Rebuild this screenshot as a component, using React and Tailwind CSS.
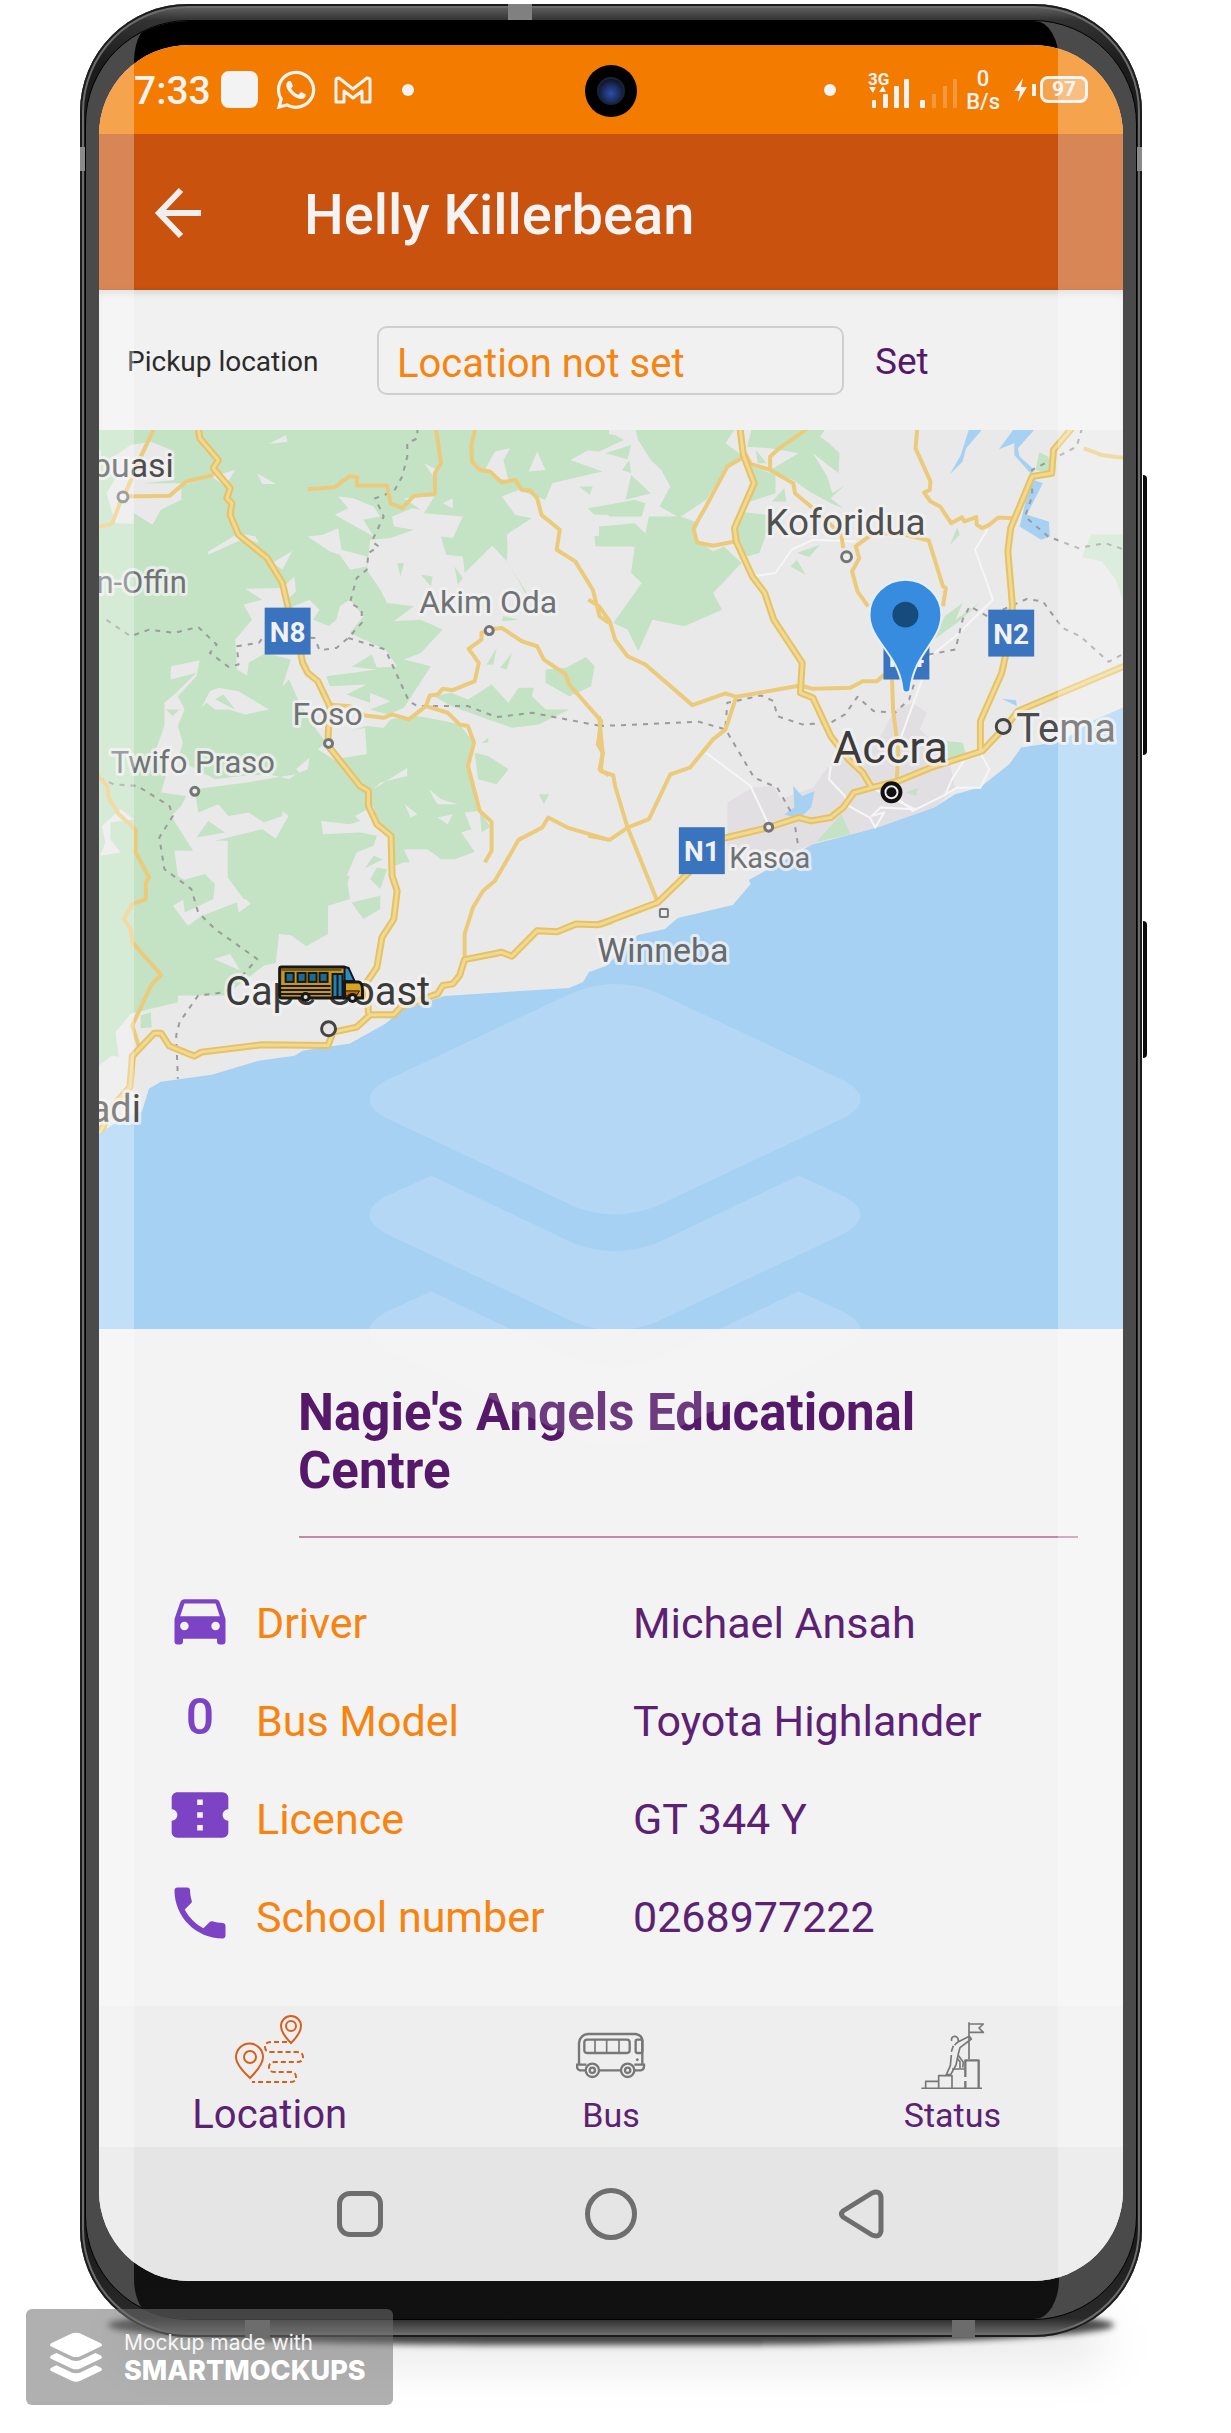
import React from "react";
import { FaWhatsapp } from "react-icons/fa";
import { MdDirectionsCar, MdConfirmationNumber, MdPhone } from "react-icons/md";

const WEST = "translate(80 420) scale(0.338 0.33333)";
const EAST = "translate(600 420) scale(0.35714 0.33333)";

const westTrunks = [
  "350,20 355,55 410,120 395,145 445,205 435,235 450,250 445,285 470,345 555,415 600,490 617,565 640,640 655,705 660,730 675,760 705,785 740,860 735,960 740,985 830,1100 855,1115 855,1160 880,1215 922,1250 925,1370 940,1415 930,1500 895,1555 880,1645 850,1690 855,1785",
  "60,2140 100,2060 148,2005 155,1912 220,1843 240,1843 265,1882 338,1912 360,1900 540,1878 735,1880 750,1840 820,1825 860,1788 930,1788 950,1765 1060,1725 1075,1700 1105,1695 1125,1670 1140,1622 1250,1600 1280,1612 1355,1535 1415,1538 1470,1515 1535,1517 1575,1505",
];
const eastTrunks = [
  "0,1517 165,1450 250,1362 300,1270 475,1225 560,1195 595,1205 650,1195 685,1165 715,1120 765,1105 840,1085 930,1045 1075,995 1150,910 1175,875 1480,737",
  "395,20 405,105 435,190 380,325 385,365 430,470 465,520 490,600 570,730 565,820 600,835 650,950 700,1020 740,1060 765,1105",
  "1330,20 1275,90 1270,160 1215,170 1155,325 1147,395 1160,560 1140,710 1130,760 1070,905 1070,995",
];
const westRoads = [
  "220,25 180,110 130,230 265,228 315,185 395,165",
  "120,245 95,312 50,322",
  "675,208 755,202 800,168 822,172 820,197 910,197 920,250 955,265 990,228 1052,222 1052,160 1070,130 1055,25",
  "1172,25 1160,75 1162,125 1185,150 1215,155 1250,188 1290,180 1310,210 1335,212 1355,235 1368,285 1422,330 1413,390 1468,425 1520,510 1540,590 1568,610",
  "740,855 800,860 845,888 900,895 925,885 975,900 1025,860 1037,828 1060,825 1075,808 1105,812 1170,785 1182,730 1152,688 1190,660 1190,640 1212,630 1250,625 1310,665 1355,680 1375,720 1440,765 1450,795 1545,905 1535,975 1550,1000 1540,1050 1568,1068",
  "1025,860 1090,880 1125,915 1150,920 1168,970 1150,1040 1185,1175 1220,1208 1220,1295 1200,1330",
  "1568,1262 1445,1225 1388,1195 1370,1225 1300,1262 1230,1385 1195,1415 1165,1465 1140,1545 1140,1620",
  "50,1065 80,1100 85,1135 115,1185 165,1232 165,1300 205,1375 195,1390 195,1440 155,1455 130,1500 150,1530 155,1570 240,1668 210,1700 155,1820 175,1885",
];
const eastRoads = [
  "-30,540 0,560 30,605 45,660 80,710 130,735 262,857 355,822 385,832 565,798 600,808 705,805 740,785 780,785 800,765",
  "0,890 10,1000 5,1055 40,1068 45,1100 80,1225 165,1450",
  "-30,1250 30,1262 80,1225 140,1200 200,1065 255,1045 320,960 355,930 385,832",
  "585,25 500,90 480,110 480,150 425,132 410,100",
  "480,150 545,190 550,220 600,265 680,345 685,385",
  "400,115 360,140 300,260 265,325 275,368 320,378 380,365",
  "965,560 973,505 965,500 925,362 860,345 770,340 720,380 730,415 710,455 725,515 755,560",
  "893,25 888,85 930,185 928,210 912,218 930,245 957,260 988,310 1018,292 1025,305 1058,292 1060,315 1075,325 1095,315 1120,293 1165,295",
  "822,780 825,870 840,1000 835,1085",
  "1360,85 1410,105 1480,115",
];
const westBorders = [
  "1000,25 1000,55 970,70 970,110 955,170 930,215 875,235 900,290 865,365 885,380 855,400 850,450 820,475 800,550 835,570 835,610 795,655 760,685 710,692 695,655 545,650 530,670 465,680 470,735 440,742 385,700 405,675 350,622 280,640 205,630 150,650 70,595",
  "795,655 905,690 975,845 1000,860 1150,860 1235,893 1340,880 1545,920",
  "56,1075 100,1095 170,1100 265,1160 275,1190 235,1255 250,1350 330,1410 350,1480 400,1530 525,1620 490,1660 430,1720 350,1730 295,1810 285,1850 290,1980",
];
const eastBorders = [
  "0,920 280,907 355,930 435,1075 500,1105 545,1190 558,1275",
  "355,920 360,850 455,828 490,845 500,890 570,915 650,910 690,885 725,832 770,875 830,880 870,840 885,790",
  "925,705 1000,690 1020,600 1040,560 1090,590 1200,538 1245,545 1300,625 1350,650 1430,727 1475,700",
  "1355,25 1340,80 1215,150 1215,230 1195,290 1260,350 1345,385 1420,370 1475,390",
];
const westGaps = [
  "560,72 610,45 615,65",
  "150,75 210,65 270,90 280,180 190,190 300,190 300,240 240,270 215,315 160,280 158,312 105,310 78,220 110,170 100,110",
  "525,160 580,192 540,192",
  "320,190 460,150 430,200 390,170 310,195",
  "470,340 520,350 530,370 490,355 380,405 380,395",
  "570,430 630,393 600,450",
  "490,507 600,505 635,470 640,515 615,540 620,565 680,540 710,570 690,600 740,620 700,650 760,600 770,560 800,540 840,590 800,640 905,690 940,740 880,745 865,705 805,742 880,750 810,760 730,770 740,800 850,795 790,825 860,850 860,820 920,845 860,870 930,890 900,925 850,920 800,935 845,925 850,1005 750,1020 705,990 730,970 700,930 650,850 620,780 600,800 625,720 550,700 500,730 495,768 465,750 460,660 510,600 485,555 540,540",
  "268,770 270,740 355,722 345,770 290,830 310,870 290,920 305,970 290,1020 400,1080 480,1070 560,1065 620,1080 640,1065 490,1090 340,1110 350,1180 410,1155 440,1190 500,1180 545,1210 600,1190 600,1175 618,1190 580,1258 540,1230 400,1265 438,1265 438,1375 485,1440 525,1440 470,1480 465,1450 360,1490 320,1520 275,1460 310,1440 335,1400 290,1370 280,1295 335,1295 270,1190 300,1160 315,1130 240,1120 260,1050 225,990 250,920 250,850 285,820 345,760 270,780",
  "360,865 385,815 410,805 470,815 560,870 490,885 440,870 400,870 375,850",
  "65,1220 120,1170 160,1200 90,1210 90,1260 120,1300 60,1310 75,1270",
  "765,230 810,235 870,260 890,290 840,300 870,350 800,310 755,285 795,265",
  "675,350 720,345 765,325 775,390 850,410 850,440 800,450 770,405 740,395",
  "925,290 985,265 1010,270 960,235 1050,230 1020,280 1135,290 1105,355 1070,350 1085,405 1135,410 1140,460 1222,378 1270,430 1320,520 1568,560 1568,1320 1240,1320 1130,1370 1130,1325 980,1335 960,1290 1030,1290 1070,1320 1185,1320 1130,1240 1160,1230 1140,1180 1185,1175 1190,1240 1220,1220 1185,1170 1150,1040 1168,970 1125,915 1080,905 1000,890 870,905 960,865 1040,740 960,720 1010,700 1075,630 1010,600 930,605 990,560 910,550 890,510 850,450 860,360 920,355 990,330 930,320",
  "1020,130 1060,150 1055,180",
  "1075,250 1105,235 1105,265",
  "1330,155 1355,95 1380,150",
  "1200,150 1230,95 1275,85 1255,120 1270,180 1230,175",
  "1455,120 1568,60 1568,620 1500,560 1440,450 1350,430 1270,420 1265,345 1340,295 1290,285 1250,230 1300,210 1380,240 1400,190 1550,155",
  "640,1050 680,1015 675,1050 650,1060",
  "715,1205 800,1215 830,1205 815,1190 870,1160 880,1215 920,1250 920,1330 870,1310 830,1370 790,1370 820,1300 870,1280 880,1250 830,1240 720,1245",
  "1035,1110 1070,1140 1120,1155 1060,1155 1050,1140",
  "1060,1195 1105,1185 1090,1215",
  "962,1155 1000,1185 980,1195",
  "870,1110 970,1045 970,1070 890,1090",
  "397,1620 445,1605 475,1655",
  "775,1440 800,1370 920,1310 925,1400 925,1560 735,1560 735,1445",
];
const westPatches = [
  "790,355 850,410 800,385",
  "940,430 960,430 950,470",
  "1010,465 1045,470 1040,500",
  "1110,440 1135,475 1120,495",
  "1250,605 1255,590 1300,600",
  "1205,735 1235,685 1225,735",
  "1245,745 1280,700 1265,750",
  "1380,750 1440,745 1500,712 1525,740 1515,800 1450,830 1380,790",
  "1100,820 1150,840 1220,795 1270,850 1300,805 1345,805 1340,830 1380,870 1450,870 1360,915 1280,925 1210,900 1100,860 1050,830",
  "1190,970 1210,955 1210,970",
  "1170,1000 1210,1010 1270,1050 1235,1095 1180,1080",
  "1360,1125 1390,1125 1375,1155",
  "1480,200 1520,200 1510,225",
  "1505,265 1568,255 1568,285 1525,285",
  "1525,350 1568,340 1568,375 1528,380",
  "345,1255 380,1205 430,1240",
  "255,870 295,870 275,890",
  "400,840 425,825 460,870",
  "440,1265 540,1240 640,1300 780,1300 800,1440 735,1460 730,1540 670,1582 560,1500 490,1440",
  "300,1385 370,1365 400,1395 395,1440 310,1480",
  "805,1450 890,1430 890,1470 840,1500",
  "860,1380 880,1345 910,1350 890,1410",
  "180,1790 210,1780 212,1825 180,1828",
];
const eastGreens = [
  "100,20 385,20 355,70 400,105 350,160 300,240 230,290 280,310 265,350 320,395 350,380 400,430 320,520 345,570 240,620 150,600 110,695 80,630 40,610 120,490 90,460 100,380 0,380 0,320 100,310 130,340 140,290 220,290 170,260 200,200 175,150 145,120 110,60",
  "-40,30 45,45 70,60 0,95 -40,90",
  "18,100 90,75 80,118",
  "65,150 85,120 90,160",
  "90,165 145,220 75,240",
  "0,260 100,240 130,250 120,290 30,290",
  "430,20 640,20 620,50 645,70 675,100 672,160 600,100 640,170 655,220 690,195 650,235 685,265 650,250 590,215 545,180 480,150 560,100 480,85 415,80",
  "445,130 440,90 470,130",
  "430,140 495,165 495,220 425,245",
  "485,245 520,205 525,245",
  "390,275 470,285 520,310 470,340 450,400 415,410 385,350",
  "555,400 620,375 590,412",
  "537,440 555,420 580,465",
  "985,375 1005,322 1012,345",
  "940,660 970,590 1020,550 1000,600 1070,548 1010,605",
  "1225,150 1235,97 1260,110 1270,160",
];
const labels = [
  { t: "buasi", x: 174, y: 477, s: 34, c: "#4d4d4d", a: "end" },
  { t: "n-Offin", x: 187, y: 593, s: 31, c: "#6f7376", a: "end" },
  { t: "Akim Oda", x: 489, y: 613, s: 32, c: "#6f7376", a: "middle" },
  { t: "Foso", x: 328, y: 726, s: 32, c: "#6f7376", a: "middle" },
  { t: "Twifo Praso", x: 193, y: 774, s: 31, c: "#6f7376", a: "middle" },
  { t: "Koforidua", x: 847, y: 535, s: 37, c: "#505050", a: "middle" },
  { t: "Accra", x: 892, y: 764, s: 45, c: "#3b3b3b", a: "middle" },
  { t: "Tema", x: 1068, y: 743, s: 40, c: "#4d4d4d", a: "middle" },
  { t: "Kasoa", x: 771, y: 869, s: 29, c: "#6f7376", a: "middle" },
  { t: "Winneba", x: 664, y: 963, s: 34, c: "#666a6e", a: "middle" },
  { t: "Cape Coast", x: 328, y: 1006, s: 40, c: "#3b3b3b", a: "middle" },
  { t: "adi", x: 141, y: 1123, s: 38, c: "#4d4d4d", a: "end" },
];
const towns = [
  [123, 497, 5],
  [490, 631, 4],
  [329, 744, 4],
  [195, 792, 4],
  [848, 557, 5],
  [770, 828, 4],
];
const shields = [
  { t: "N8", x: 265, y: 608 },
  { t: "N2", x: 990, y: 610 },
  { t: "N1", x: 680, y: 828 },
  { t: "N4", x: 885, y: 633 },
];

function Lines({ list, color, width, dash }) {
  return list.map((p) => (
    <polyline
      key={p}
      points={p}
      fill="none"
      stroke={color}
      strokeWidth={width}
      strokeDasharray={dash}
      strokeLinejoin="round"
      vectorEffect="non-scaling-stroke"
    />
  ));
}

function Shapes({ list, color }) {
  return list.map((p) => <polygon key={p} points={p} fill={color} />);
}

function SchoolBus() {
  return (
    <g>
      <rect x="280" y="968" width="66" height="31" rx="2" fill="#c6971d" stroke="#171717" strokeWidth="3" />
      <rect x="282" y="970" width="60" height="2" fill="#171717" opacity=".5" />
      {[286, 298, 309, 320].map((x) => (
        <rect key={x} x={x} y="974" width="8" height="9" fill="#1f6a93" stroke="#171717" strokeWidth="2" />
      ))}
      <path d="M281 987h50M281 991h50M281 995h50" stroke="#171717" strokeWidth="2" />
      <path d="M333 975h10v23h-10zM338 975v23" fill="#2380b3" stroke="#171717" strokeWidth="2" />
      <path d="M345 968l4 1 6 13h-10z" fill="#2c8dc4" stroke="#171717" strokeWidth="2" />
      <path d="M345 983h14q4 1 4 8v8h-18z" fill="#d9a520" stroke="#171717" strokeWidth="3" />
      <path d="M346 992h14l-3 5h-11z" fill="#bf6a12" stroke="#171717" strokeWidth="1" />
      <circle cx="306" cy="998" r="5" fill="#171717" />
      <circle cx="306" cy="998" r="2" fill="#ddd" />
      <circle cx="353" cy="999" r="5" fill="#171717" />
      <circle cx="353" cy="999" r="2" fill="#ddd" />
    </g>
  );
}

function CoastMap() {
  return (
    <svg viewBox="99 430 1026 901" className="block h-auto w-full" role="img" aria-label="Map from Cape Coast to Accra">
      <rect x="99" y="430" width="1026" height="901" fill="#a6d1f3" />
      <path
        fill="#e9e9e9"
        d="M99 430H1125V708L1093 722 1064 742 1023 748 1011 765 982 788 957 795 936 808 879 828 857 834 814 845 764 873 750 881 752 885 734 906 679 919 666 930 639 936 607 967 590 973 584 983 570 989 445 997 401 1012 386 1025 350 1045 328 1048 303 1052 295 1057 259 1062 212 1076 161 1083 149 1090 142 1113 125 1118 99 1135Z"
      />
      <g transform={WEST}>
        <polygon
          fill="#c4e2c4"
          points="50,20 1568,20 1568,55 1455,120 1550,155 1400,190 1380,240 1340,295 1270,340 1265,425 1400,640 1200,900 1165,970 1180,1170 1215,1220 1190,1290 1100,1325 960,1330 820,1380 780,1440 735,1445 735,1545 670,1582 640,1550 590,1545 580,1632 545,1640 430,1730 290,1730 290,1750 150,1785 105,1840 115,1915 95,1910 50,1945"
        />
        <Shapes list={westGaps} color="#e9e9e9" />
        <Shapes list={westPatches} color="#c4e2c4" />
      </g>
      <g transform={EAST}>
        <Shapes list={eastGreens} color="#c4e2c4" />
        <polygon points="1380,343 1475,343 1475,560 1450,480 1410,425 1355,412" fill="#cfe6cf" />
        <polygon
          fill="#e2dfe3"
          points="360,1150 430,1105 490,1100 510,1140 600,1105 640,1045 700,1010 790,950 830,870 880,850 920,880 900,930 980,1010 1000,1110 940,1165 780,1225 600,1275 540,1300 360,1290"
        />
        <Shapes
          list={["975,965 1020,970 1030,1005 980,1020", "680,1185 705,1245 610,1268", "860,1120 895,1105 890,1130"]}
          color="#c4e2c4"
        />
        <Shapes
          list={[
            "1040,20 1075,28 1030,85 1020,125 985,162 1015,105",
            "1165,25 1225,25 1175,85 1180,110 1222,150 1212,162 1165,105 1165,70 1122,88",
            "1220,180 1245,190 1200,285 1262,305 1265,350 1240,360 1180,320 1200,230",
            "545,1100 570,1130 605,1115 595,1165 560,1200 520,1185 548,1165",
            "1130,838 1170,842 1172,860",
          ]}
          color="#a6d1f3"
        />
        <Lines
          list={[
            "430,470 495,460 540,390 600,360 720,365",
            "1090,330 1055,390 1105,540 1000,650 930,710 845,960",
            "300,1000 425,1100 475,1215",
            "650,1040 645,1080 690,1130 700,1160 760,1195 775,1225 800,1180 765,1190 790,1165 885,1170 765,1105",
            "1070,1000 1095,1050 1070,1105 1005,1105 965,1130 880,1175 830,1130",
            "1035,1005 990,1080 970,1130",
          ]}
          color="#f6f6f6"
          width="2"
        />
      </g>
      <g transform={WEST}>
        <Lines list={westBorders} color="#9b9b9b" width="2" dash="5 6" />
        <Lines list={westRoads} color="#ebcb7b" width="4" />
        <Lines list={westTrunks} color="#e6c264" width="7" />
        <Lines list={westTrunks} color="#f0d993" width="3" />
      </g>
      <g transform={EAST}>
        <Lines list={eastBorders} color="#9b9b9b" width="2" dash="5 6" />
        <Lines list={eastRoads} color="#ebcb7b" width="4" />
        <Lines list={eastTrunks} color="#e6c264" width="7" />
        <Lines list={eastTrunks} color="#f0d993" width="3" />
      </g>
      {towns.map(([x, y, r]) => (
        <circle key={x} cx={x} cy={y} r={r} fill="#eee" stroke="#757575" strokeWidth="3" />
      ))}
      <rect x="661" y="910" width="8" height="8" rx="1" fill="#eee" stroke="#757575" strokeWidth="2" />
      <circle cx="1005" cy="727" r="7" fill="#e4e4e4" stroke="#444" strokeWidth="3" />
      <circle cx="329" cy="1030" r="7" fill="#e4e4e4" stroke="#444" strokeWidth="3" />
      <circle cx="893" cy="793" r="9" fill="#eee" stroke="#111" strokeWidth="4" />
      <circle cx="893" cy="793" r="5" fill="#111" />
      {labels.map((l) => (
        <text
          key={l.t}
          x={l.x}
          y={l.y}
          fontSize={l.s}
          fill={l.c}
          textAnchor={l.a}
          stroke="#f2f2f2"
          strokeOpacity="0.8"
          strokeWidth="6"
          strokeLinejoin="round"
          paintOrder="stroke"
        >
          {l.t}
        </text>
      ))}
      {shields.map((s) => (
        <g key={s.t}>
          <rect x={s.x} y={s.y} width="46" height="47" fill="#3a74be" />
          <text x={s.x + 23} y={s.y + 34} fontSize="28" fontWeight="700" fill="#f1f1f1" textAnchor="middle">
            {s.t}
          </text>
        </g>
      ))}
      <path
        d="M907 580c-20 0-36 16-36 35 0 27 29 38 33 74q0 4 4 4t4-4c4-36 31-47 31-74 0-19-16-35-36-35z"
        fill="#388ce0"
        stroke="#e6eef5"
        strokeWidth="2"
      />
      <circle cx="907" cy="615" r="13" fill="#164b7d" />
      <SchoolBus />
    </svg>
  );
}

function LayerShapes() {
  const chevron =
    "M800 1177L846 1198Q878 1216 846 1235L657 1324Q616 1340 575 1324L386 1235Q354 1216 386 1198L432 1177L575 1245Q616 1260 657 1245Z";
  return (
    <>
      <path d="M575 993Q616 977 657 993L846 1082Q878 1101 846 1119L657 1208Q616 1224 575 1208L386 1119Q354 1101 386 1082Z" />
      <path d={chevron} />
      <path d={chevron} transform="translate(0 116)" />
    </>
  );
}

function StatusBar() {
  return (
    <div className="flex h-[89px] items-center justify-between bg-[#f37b00] px-[35px] text-[#f3f3f3]">
      <div className="flex items-center">
        <span className="pt-1 text-[39px] leading-none font-medium">7:33</span>
        <span className="ml-[10px] h-[37px] w-[37px] rounded-lg bg-[#f3f3f3]" />
        <FaWhatsapp className="ml-4 h-[44px] w-[44px]" />
        <svg viewBox="0 0 38 28" className="ml-4 h-7 w-[38px]" fill="none" stroke="currentColor" strokeWidth="3" strokeLinejoin="round">
          <path d="M2 4Q2 2 5 2L19 13 33 2Q36 2 36 4V26H28V15L19 22 10 15V26H2Z" />
        </svg>
        <span className="ml-[30px] h-3 w-3 rounded-full bg-[#f3f3f3]" />
      </div>
      <div className="flex items-center">
        <span className="mr-[32px] h-3 w-3 rounded-full bg-[#f3f3f3]" />
        <svg viewBox="868 66 92 40" className="h-10 w-[92px]" fill="currentColor">
          <text x="868" y="81" fontSize="17" fontWeight="700">3G</text>
          <path d="M869 83h7l-3 6zM879 88h7l-3-6z" />
          <rect x="872" y="96" width="4" height="8" rx="1" />
          <rect x="883" y="90" width="5" height="14" rx="1" />
          <rect x="894" y="82" width="5" height="22" rx="1" />
          <rect x="904" y="75" width="5" height="29" rx="1" />
          <rect x="920" y="96" width="5" height="8" rx="1" />
          <g opacity=".25">
            <rect x="932" y="90" width="4" height="14" />
            <rect x="943" y="82" width="4" height="22" />
            <rect x="953" y="75" width="4" height="29" />
          </g>
        </svg>
        <span className="ml-[6px] text-center text-[22px] leading-[23px] font-medium">
          0<br />
          B/s
        </span>
        <svg viewBox="0 0 26 24" className="ml-[14px] h-6 w-[26px]" fill="currentColor">
          <path d="M9 0L0 13h6L4 24 13 9H7zM18 6h4v12h-4z" />
        </svg>
        <span className="flex h-[27px] w-12 items-center justify-center rounded-lg border-[3px] border-[#f3f3f3] bg-white/30 text-[21px] leading-none font-bold">
          97
        </span>
      </div>
    </div>
  );
}

const details = [
  { icon: <MdDirectionsCar size={68} />, label: "Driver", value: "Michael Ansah" },
  { icon: <span className="text-[50px] leading-none font-medium">0</span>, label: "Bus Model", value: "Toyota Highlander" },
  { icon: <MdConfirmationNumber size={68} />, label: "Licence", value: "GT 344 Y" },
  { icon: <MdPhone size={68} />, label: "School number", value: "0268977222" },
];

function RouteIcon() {
  return (
    <svg viewBox="0 0 70 74" className="h-[74px] w-[70px]" fill="none" stroke="#d4601f" strokeWidth="2">
      <path d="M56 28Q46 18 46 11a10 10 0 0 1 20 0Q66 18 56 28z" />
      <circle cx="56" cy="11" r="5" />
      <path d="M15 63Q1 50 1 42a13 13 0 0 1 27 0Q28 50 15 63z" />
      <circle cx="15" cy="42" r="6" />
      <path
        strokeDasharray="5 3"
        d="M52 27H36q-6 0-6 5t6 5H62q6 0 6 5t-6 5H40q-6 0-6 5t6 5h16q5 0 5 5t-5 5H17"
      />
    </svg>
  );
}

function BusIcon() {
  return (
    <svg viewBox="0 0 70 74" className="h-[74px] w-[70px]" fill="none" stroke="#777" strokeWidth="2">
      <g transform="translate(-17 -6) scale(.33333)" strokeWidth="7">
        <path d="M60 165V102Q64 76 88 75H230Q249 78 250 95V165" />
        <path d="M80 184H62Q54 182 54 172V167H82M226 184H246Q255 182 255 172V167H226M121 184H186" />
        <rect x="76" y="92" width="136" height="40" rx="8" />
        <path d="M108 92V132M143 92V132M180 92V132" strokeWidth="5" />
        <rect x="230" y="92" width="20" height="40" rx="5" />
        <circle cx="100" cy="184" r="20" />
        <circle cx="100" cy="184" r="8" />
        <circle cx="206" cy="184" r="20" />
        <circle cx="206" cy="184" r="8" />
        <circle cx="235" cy="152" r="3" fill="#777" strokeWidth="3" />
      </g>
    </svg>
  );
}

function StatusIcon() {
  return (
    <svg viewBox="0 0 70 74" className="h-[74px] w-[70px]" fill="none" stroke="#777">
      <g transform="translate(-359 -6) scale(.33333)" strokeWidth="5" strokeLinejoin="round">
        <path d="M1233 40V150M1233 45H1276L1263 57 1276 70H1233" />
        <path d="M1090 238H1272M1103 238V217H1142M1142 238V200H1182V238M1182 180H1220" />
        <path d="M1222 204V154H1262V238M1222 216V238" strokeWidth="7" />
        <path d="M1181 96a10 11 0 1 1 14 7l-5 6M1200 99L1234 82 1240 90 1206 116 1200 138 1216 160 1214 176" />
        <path d="M1186 110L1180 128M1180 138L1177 170 1165 197H1178L1194 168 1200 140M1196 146L1206 158V178" />
      </g>
    </svg>
  );
}

const tabs = [
  { label: "Location", icon: <RouteIcon />, cls: "text-[40px]" },
  { label: "Bus", icon: <BusIcon />, cls: "text-[34px]" },
  { label: "Status", icon: <StatusIcon />, cls: "text-[34px]" },
];

function Screen() {
  return (
    <div className="relative overflow-hidden rounded-[90px] bg-[#f3f3f3]">
      <StatusBar />
      <header className="flex h-[156px] items-center bg-[#c8520e] pl-[53px]">
        <button type="button" aria-label="Back" className="h-14 w-14">
          <svg viewBox="0 0 56 56" fill="none" stroke="#f1efee" strokeWidth="6">
            <path d="M49 29H8M29 6L7 29L29 52" />
          </svg>
        </button>
        <h1 className="ml-[96px] pt-[6px] text-[56px] leading-none font-medium text-[#f3f3f3]">Helly Killerbean</h1>
      </header>
      <form className="relative flex h-[140px] items-center bg-[#f1f1f1] pl-[28px] shadow-[inset_0_6px_8px_-4px_rgba(0,0,0,0.15),0_1px_4px_rgba(0,0,0,0.25)]">
        <label htmlFor="pickup" className="w-[250px] pt-1 text-[28px] text-[#2b2b2b]">
          Pickup location
        </label>
        <input
          id="pickup"
          type="text"
          defaultValue="Location not set"
          className="h-[69px] min-w-0 flex-1 rounded-[10px] border-2 border-[#cfcfcf] bg-transparent px-[18px] pt-[6px] text-[40px] text-[#f58410] outline-none"
        />
        <button type="button" className="w-[279px] pt-1 pl-[31px] text-left text-[37px] text-[#56196a]">
          Set
        </button>
      </form>
      <div className="relative">
        <CoastMap />
        <svg
          viewBox="99 430 1026 901"
          className="pointer-events-none absolute inset-0 h-full w-full overflow-visible"
          fill="#fff"
          fillOpacity=".15"
          aria-hidden="true"
        >
          <LayerShapes />
        </svg>
      </div>
      <section className="pt-[55px] pb-11">
        <h2 className="mr-[100px] ml-[199px] text-[51px] leading-[58px] font-bold text-[#56196a]">
          Nagie's Angels Educational Centre
        </h2>
        <hr className="mt-9 mr-[45px] ml-[200px] border-t-2 border-[#c08aa8]" />
        <dl className="mt-8 pl-[67px]">
          {details.map((d) => (
            <div key={d.label} className="flex h-[98px] items-center text-[43px] leading-[50px]">
              <span className="flex w-[68px] justify-center text-[#7c44c4]">{d.icon}</span>
              <dt className="w-[399px] pt-2 pl-[22px] text-[#f58410]">{d.label}</dt>
              <dd className="pt-2 text-[#5d2173]">{d.value}</dd>
            </div>
          ))}
        </dl>
      </section>
      <nav className="grid h-[141px] grid-cols-3 items-end bg-[#eee] pb-3">
        {tabs.map((t) => (
          <button key={t.label} type="button" className="flex flex-col items-center text-[#5d2173]">
            {t.icon}
            <span className={`mt-[6px] leading-10 ${t.cls}`}>{t.label}</span>
          </button>
        ))}
      </nav>
      <div className="grid h-[134px] grid-cols-3 place-items-center bg-[#e5e5e5] px-[136px]">
        <button type="button" aria-label="Recent apps" className="h-[46px] w-[46px] rounded-[13px] border-[5px] border-[#6e6e6e]" />
        <button type="button" aria-label="Home" className="h-[52px] w-[52px] rounded-full border-[5px] border-[#6e6e6e]" />
        <button type="button" aria-label="Back" className="h-[52px] w-[48px]">
          <svg viewBox="0 0 48 52" fill="none" stroke="#6e6e6e" strokeWidth="5" strokeLinejoin="round">
            <path d="M5 23L34 5Q42 2 43 9V43Q42 50 34 47L5 29Q2 26 5 23Z" />
          </svg>
        </button>
      </div>
      <div className="pointer-events-none absolute top-5 left-1/2 flex h-[52px] w-[52px] -translate-x-1/2 items-center justify-center rounded-full bg-black">
        <span className="h-7 w-7 rounded-full border-2 border-[#1b2334] bg-[radial-gradient(circle_at_50%_60%,#2a4fb0_0%,#1c2c5c_45%,#0b1020_80%)]" />
      </div>
      <div className="pointer-events-none absolute inset-y-0 left-0 w-[35px] bg-white/30" />
      <div className="pointer-events-none absolute inset-y-0 right-0 w-[65px] bg-white/30" />
    </div>
  );
}

export default function App() {
  return (
    <main className="relative overflow-hidden bg-white pt-1 pr-[89px] pb-[93px] pl-20 font-[Roboto,sans-serif]">
      <div className="relative">
        <div className="absolute right-7 -bottom-2 left-7 h-10 rounded-[50%/60%] bg-black/70 blur-[3px]" />
        <div className="absolute right-10 -bottom-6 left-10 h-10 bg-black/10 blur-xl" />
        <div className="absolute top-[471px] -right-[5px] h-[280px] w-1 rounded-r bg-[#0b0b0b]" />
        <div className="absolute top-[917px] -right-[5px] h-[137px] w-1 rounded-r bg-[#0b0b0b]" />
        <div className="relative overflow-hidden rounded-[108px] bg-[linear-gradient(to_bottom,#6a6a6a_0,#333_16px,#1c1c1c_60px,#1c1c1c_96%,#2a2a2a_99.2%,#777_100%)] px-[5px] pt-4 pb-[17px] shadow-[inset_0_0_0_2px_#1c1c1c,inset_0_0_0_4px_#6c6c6c]">
          <div className="absolute top-0 left-[428px] h-[18px] w-6 bg-[#808080]" />
          <div className="absolute bottom-0 left-[165px] h-5 w-[25px] bg-[#6c6c6c]" />
          <div className="absolute right-[167px] bottom-0 h-5 w-[23px] bg-[#6c6c6c]" />
          <div className="absolute top-[143px] left-0 h-6 w-[5px] bg-[#8a8a8a]" />
          <div className="absolute top-[143px] right-0 h-6 w-[5px] bg-[#8a8a8a]" />
          <div className="relative overflow-hidden rounded-[104px] border border-black bg-[#4a4a4a] pt-6 pr-[13px] pb-[38px] pl-[13px]">
            <div className="absolute inset-y-0 right-[77px] left-12 rounded-[24px/40px] bg-gradient-to-b from-black to-[#111]" />
            <Screen />
          </div>
        </div>
      </div>
      <a
        href="#smartmockups"
        className="absolute bottom-[25px] left-[26px] flex h-24 w-[367px] items-center rounded-md bg-[#707070]/55 pl-6 font-[Inter,sans-serif] text-white"
      >
        <svg viewBox="370 981 492 468" className="h-[50px] w-[52px]" fill="#fff" aria-hidden="true">
          <LayerShapes />
        </svg>
        <span className="ml-[22px] flex flex-col pt-1">
          <span className="text-[21px] leading-6 text-white/90">Mockup made with</span>
          <span className="text-[27px] leading-8 font-extrabold">SMARTMOCKUPS</span>
        </span>
      </a>
    </main>
  );
}
